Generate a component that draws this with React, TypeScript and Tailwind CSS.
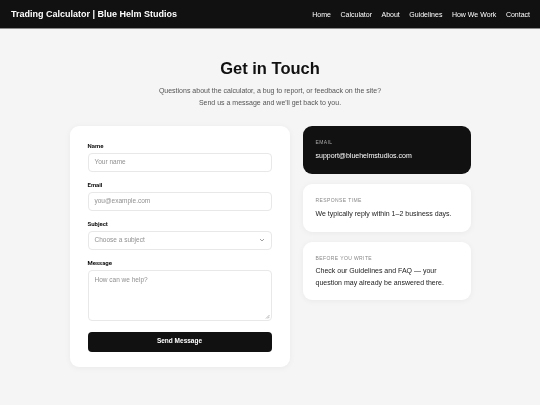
import React from "react";

export default function App() {
  const font = { fontFamily: '"Liberation Sans", Arial, sans-serif' };
  const links = ["Home", "Calculator", "About", "Guidelines", "How We Work", "Contact"];
  return (
    <div className="w-[540px] h-[405px] bg-[#f5f5f5] overflow-hidden antialiased will-change-transform" style={font}>
      <header className="h-[29px] bg-[#111111] border-b border-[#8a8a8a] flex items-center justify-between pl-[11px] pr-[10px]">
        <div className="text-white font-bold text-[9px] leading-none">Trading Calculator | Blue Helm Studios</div>
        <nav className="flex gap-[9.5px] text-[7px] text-white leading-none">
          {links.map((l) => (
            <span key={l}>{l}</span>
          ))}
        </nav>
      </header>
      <main className="flex flex-col items-center">
        <h1 className="mt-[31px] text-[16.5px] font-bold text-[#111] leading-none">Get in Touch</h1>
        <p className="mt-[8px] text-[7px] leading-[12px] text-[#555] text-center">
          Questions about the calculator, a bug to report, or feedback on the site?
          <br />
          Send us a message and we'll get back to you.
        </p>
        <div className="mt-[17px] grid grid-cols-[220px_168px] gap-[13px] items-start">
          <form className="bg-white rounded-[9px] shadow-[0_1px_6px_rgba(0,0,0,0.05)] px-[18px] pt-[17px] pb-[15px] flex flex-col">
            <Label>Name</Label>
            <Input placeholder="Your name" />
            <Label className="mt-[10px]">Email</Label>
            <Input placeholder="you@example.com" />
            <Label className="mt-[10px]">Subject</Label>
            <div className="h-[19px] border border-[#e8e8e8] rounded-[4px] flex items-center justify-between pl-[6px] pr-[6px]">
              <span className="text-[6.5px] text-[#909090]">Choose a subject</span>
              <svg width="6" height="4" viewBox="0 0 6 4">
                <path d="M1 1 L3 3 L5 1" stroke="#888" strokeWidth="0.8" fill="none" />
              </svg>
            </div>
            <Label className="mt-[10px]">Message</Label>
            <div className="relative h-[51px] border border-[#e8e8e8] rounded-[4px] pl-[6px] pt-[6px]">
              <span className="text-[6.5px] text-[#909090] leading-none block">How can we help?</span>
              <svg className="absolute right-[1px] bottom-[1px]" width="5" height="5" viewBox="0 0 5 5">
                <path d="M1 4.5 L4.5 1 M2.8 4.5 L4.5 2.8" stroke="#888" strokeWidth="0.6" />
              </svg>
            </div>
            <button type="button" className="mt-[11px] h-[20px] rounded-[4px] bg-[#111111] text-white text-[6.5px] font-bold leading-none">
              Send Message
            </button>
          </form>
          <div className="flex flex-col gap-[10px]">
            <div className="bg-[#111111] rounded-[9px] px-[13px] pt-[14px] h-[48px]">
              <div className="text-[5px] tracking-[0.08em] text-[#aaaaaa] leading-none">EMAIL</div>
              <div className="mt-[7px] text-[7px] text-white leading-none">support@bluehelmstudios.com</div>
            </div>
            <div className="bg-white rounded-[9px] shadow-[0_1px_6px_rgba(0,0,0,0.05)] px-[13px] pt-[14px] h-[48px]">
              <div className="text-[5px] tracking-[0.08em] text-[#888] leading-none">RESPONSE TIME</div>
              <div className="mt-[7px] text-[7px] text-[#222] leading-none">We typically reply within 1–2 business days.</div>
            </div>
            <div className="bg-white rounded-[9px] shadow-[0_1px_6px_rgba(0,0,0,0.05)] px-[13px] pt-[14px] h-[58px]">
              <div className="text-[5px] tracking-[0.08em] text-[#888] leading-none">BEFORE YOU WRITE</div>
              <div className="mt-[4px] text-[7px] text-[#222] leading-[12.5px]">
                Check our Guidelines and FAQ — your
                <br />
                question may already be answered there.
              </div>
            </div>
          </div>
        </div>
      </main>
    </div>
  );
}

function Label({ children, className = "" }: { children: React.ReactNode; className?: string }) {
  return (
    <div
      className={`text-[6px] font-bold text-[#111] leading-none mb-[4px] ${className}`}
      style={{ fontFamily: 'Roboto, "Liberation Sans", sans-serif' }}
    >
      {children}
    </div>
  );
}

function Input({ placeholder }: { placeholder: string }) {
  return (
    <div className="h-[19px] border border-[#e8e8e8] rounded-[4px] flex items-center pl-[6px]">
      <span className="text-[6.5px] text-[#909090]">{placeholder}</span>
    </div>
  );
}
